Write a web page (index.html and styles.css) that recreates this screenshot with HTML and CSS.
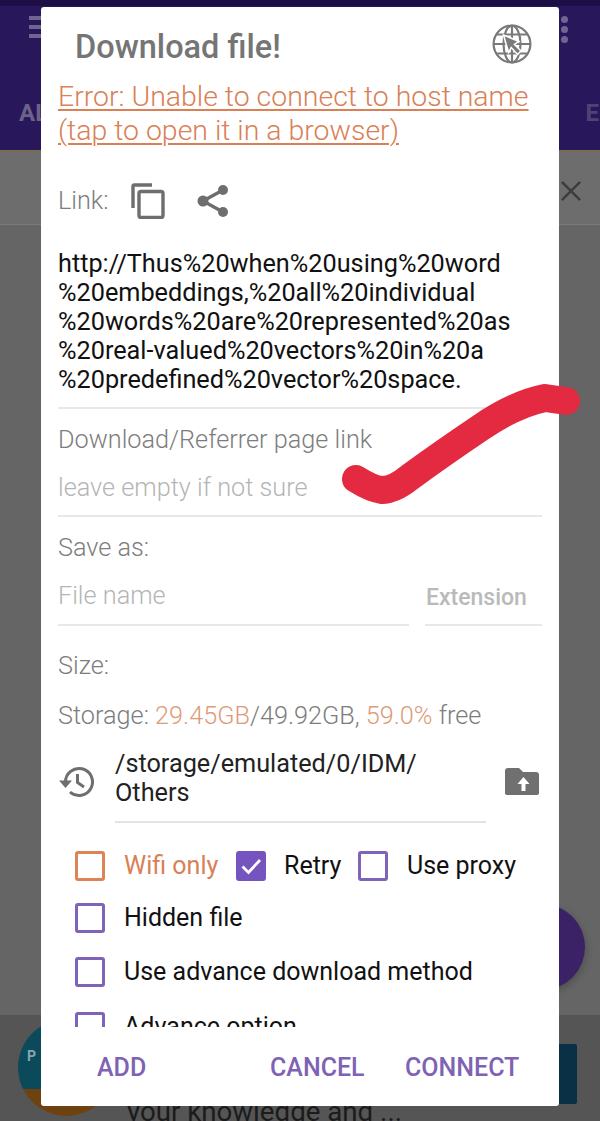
FILE: index.html
```html
<!DOCTYPE html>
<html lang="en">
<head>
<meta charset="utf-8">
<title>Download file!</title>
<link rel="stylesheet" href="styles.css">
</head>
<body>
<div class="app">
  <header class="appbar">
    <div class="toprow">
      <div class="burger"><i></i><i></i><i></i></div>
      <div class="dots"><i></i><i></i><i></i></div>
    </div>
    <div class="tabs"><span>AL</span><span class="tab-dim">EL</span></div>
  </header>
  <div class="content">
    <div class="notice">
      <svg class="close" viewBox="0 0 24 24"><path d="M2 2 22 22M22 2 2 22"/></svg>
    </div>
    <div class="fab-wrap"><div class="fab"></div></div>
  </div>
  <div class="ad">
    <div class="ad-logo"><span>P</span></div>
    <div class="ad-text">your knowledge and ...</div>
    <div class="ad-btn"></div>
  </div>
</div>

<section class="dialog">
  <div class="title-row">
    <h1 class="title">Download file!</h1>
    <svg class="globe" viewBox="0 0 40 40">
      <g class="globe-lines">
        <circle cx="20" cy="20" r="18.4"/>
        <ellipse cx="20" cy="20" rx="8.5" ry="18.4"/>
        <path d="M20 1.6V38.4M1.6 20H38.4M4.5 10.5H35.5M4.5 29.5H35.5"/>
      </g>
      <path class="cursor" d="M11.5 11 27 17.5 22.4 20.4 29 27 25.6 30.4 19.2 23.6 16.6 28.5Z"/>
    </svg>
  </div>
  <a class="error">Error: Unable to connect to host name<br>(tap to open it in a browser)</a>
  <div class="link-row">
    <span class="label">Link:</span>
    <svg class="icon-copy" viewBox="0 0 34 36">
      <path d="M2 25V3.5Q2 2 3.5 2H21"/>
      <rect x="8" y="8.500" width="24" height="26" rx="2"/>
    </svg>
    <svg class="icon-share" viewBox="0 0 32 36">
      <path class="share-line" d="M26 7 6 18 26 29"/>
      <circle cx="26" cy="7" r="5"/><circle cx="6" cy="18" r="5.500"/><circle cx="26" cy="29" r="5"/>
    </svg>
  </div>
  <p class="url">http://Thus%20when%20using%20word<br>%20embeddings,%20all%20individual<br>%20words%20are%20represented%20as<br>%20real-valued%20vectors%20in%20a<br>%20predefined%20vector%20space.</p>
  <div class="field-referrer">
    <div class="label">Download/Referrer page link</div>
    <div class="hint">leave empty if not sure</div>
  </div>
  <div class="label save-as">Save as:</div>
  <div class="name-row">
    <div class="hint name">File name</div>
    <div class="ext">Extension</div>
  </div>
  <div class="label size">Size:</div>
  <div class="label storage">Storage: <b>29.45GB</b>/49.92GB, <b>59.0%</b> free</div>
  <div class="path-row">
    <svg class="icon-history" viewBox="0 0 36 36">
      <path d="M6.500 18A13.500 13.500 0 1 1 11 28"/>
      <path d="M18.500 10V18.500L25 23"/>
      <path class="arrow" d="M0 16.500H13L6.500 24Z"/>
    </svg>
    <div class="path">/storage/emulated/0/IDM/<br>Others</div>
    <svg class="icon-folder" viewBox="0 0 34 30">
      <path class="folder" d="M3 1H14L18 5H31Q34 5 34 8V26Q34 28 31 28H3Q0 28 0 26V4Q0 1 3 1Z"/>
      <path class="up" d="M20.500 24V17H24.500L18.500 10 12.500 17H16.500V24Z"/>
    </svg>
  </div>
  <div class="options">
    <div class="opt-row first">
      <span class="box box-warn"></span><span class="opt opt-warn opt-wifi">Wifi only</span>
      <span class="box box-on"><svg viewBox="0 0 30 30"><path d="M6.500 15.500 12.500 21.500 24 9"/></svg></span><span class="opt opt-retry">Retry</span>
      <span class="box"></span><span class="opt">Use proxy</span>
    </div>
    <div class="opt-row hidden-row"><span class="box"></span><span class="opt">Hidden file</span></div>
    <div class="opt-row adv-row"><span class="box"></span><span class="opt">Use advance download method</span></div>
    <div class="opt-row last-row"><span class="box"></span><span class="opt">Advance option</span></div>
  </div>
  <div class="actions">
    <span class="btn-add">ADD</span>
    <span class="btn-cancel">CANCEL</span>
    <span class="btn-connect">CONNECT</span>
  </div>
</section>

<svg class="scribble" viewBox="0 0 600 1121"><path d="M356 479Q372 489 382 490 394 490 410 477 440 455 480 428 515 404 545 398L566 401"/></svg>
</body>
</html>
```
FILE: styles.css
```css
* { box-sizing: border-box; }
html, body { margin: 0; padding: 0; }
body { width: 600px; height: 1121px; overflow: hidden; position: relative; font-family: Roboto, "Liberation Sans", sans-serif; background: #666; }

.app { width: 600px; height: 1121px; display: flex; flex-direction: column; overflow: hidden; }
.appbar { height: 152px; background: #29175c; border-top: 6px solid #1d0f45; border-bottom: 2px solid #7a6a52; flex: none; }
.toprow { display: flex; justify-content: space-between; padding: 10px 32px 0 29px; height: 90px; }
.burger { display: flex; flex-direction: column; gap: 5px; width: 24px; }
.burger i { display: block; height: 4px; background: #6f6590; }
.dots { display: flex; flex-direction: column; gap: 3px; }
.dots i { display: block; width: 7px; height: 7px; border-radius: 50%; background: #6f6590; }
.tabs { display: flex; justify-content: space-between; padding: 0 0 0 19px; margin-top: 2px; font-size: 24px; font-weight: 700; color: #6c6288; line-height: 30px; width: 612px; overflow: hidden; }
.tab-dim { color: #4e4474; }

.content { flex: 1; display: flex; flex-direction: column; background: #656565; }
.notice { height: 73px; background: #6d6d6d; border-bottom: 1px solid #7b7b7b; display: flex; justify-content: flex-end; align-items: flex-start; padding: 28px 18px 0 0; }
.close { width: 22px; height: 22px; fill: none; stroke: #3c3c3c; stroke-width: 2.600; }
.fab-wrap { flex: 1; display: flex; justify-content: flex-end; align-items: flex-end; padding: 0 15px 25px 0; }
.fab { width: 86px; height: 86px; border-radius: 50%; background: #3b2266; box-shadow: 0 3px 8px rgba(0,0,0,.25); }

.ad { height: 106px; flex: none; background: #555; position: relative; display: flex; padding: 4px 23px 0 18px; }
.ad-logo { width: 97px; height: 97px; border-radius: 50%; flex: none; background: linear-gradient(#0b4a5a 0 72%, #6e4210 72%); color: #8aa5ad; font-size: 14px; font-weight: 700; padding: 29px 0 0 9px; }
.ad-text { flex: 1; margin: 75px 0 0 12px; font-size: 27.700px; line-height: 36px; color: #1b1b1b; white-space: nowrap; }
.ad-btn { width: 40px; height: 60px; margin-top: 25px; background: #0a3045; border-radius: 2px; flex: none; }

.dialog { position: absolute; left: 41px; top: 7px; width: 518px; height: 1099px; background: #fff; border-radius: 3px; padding: 0 17px; display: flex; flex-direction: column; }
.title-row { height: 73px; display: flex; justify-content: space-between; align-items: flex-start; padding: 15px 0 0 17px; flex: none; }
.title { margin: 0; font-size: 32.500px; line-height: 50px; font-weight: 500; color: #757575; white-space: nowrap; }
.globe { width: 40px; height: 40px; margin: 2px 10px 0 0; }
.globe-lines { fill: none; stroke: #7a7a7a; stroke-width: 2.200; }
.cursor { fill: #7a7a7a; stroke: #fff; stroke-width: 1.500; }
.error { display: block; font-size: 28.450px; font-weight: 300; line-height: 34px; color: #d98055; text-decoration: underline; text-underline-offset: 3px; text-decoration-thickness: 1.500px; white-space: nowrap; flex: none; }
.link-row { display: flex; align-items: center; height: 60px; margin-top: 23px; flex: none; }
.label { font-size: 25.250px; line-height: 34px; font-weight: 300; color: #7d7d7d; white-space: nowrap; }
.icon-copy { width: 34px; height: 36px; margin-left: 22px; fill: none; stroke: #6e6e6e; stroke-width: 3.400; }
.icon-share { width: 32px; height: 36px; margin-left: 32px; fill: #6e6e6e; }
.share-line { fill: none; stroke: #6e6e6e; stroke-width: 3.400; }
.url { margin: 18px 0 0; height: 160px; font-size: 25.250px; line-height: 29px; color: #111; border-bottom: 2px solid #e8e8e8; width: 484px; white-space: nowrap; flex: none; }
.field-referrer { height: 108px; width: 484px; border-bottom: 2px solid #e8e8e8; padding-top: 14px; flex: none; }
.hint { font-size: 25.250px; line-height: 34px; font-weight: 300; color: #b5b5b5; }
.field-referrer .hint { margin-top: 14px; }
.save-as { margin-top: 14px; flex: none; }
.name-row { display: flex; gap: 16px; margin-top: 14px; width: 484px; flex: none; }
.name { width: 351px; height: 47px; border-bottom: 2px solid #e8e8e8; }
.ext { width: 117px; height: 47px; border-bottom: 2px solid #e8e8e8; padding: 2px 0 0 1px; font-size: 23px; line-height: 34px; font-weight: 500; color: #bababa; }
.size { margin-top: 23px; flex: none; }
.storage { margin-top: 16px; flex: none; }
.storage b { font-weight: 300; color: #dd9b78; }
.path-row { display: flex; align-items: flex-start; margin-top: 16px; height: 75px; flex: none; }
.icon-history { width: 36px; height: 36px; margin: 15px 0 0 1px; fill: none; stroke: #6e6e6e; stroke-width: 3; }
.arrow { fill: #6e6e6e; stroke: none; }
.path { width: 371px; height: 74px; margin-left: 20px; border-bottom: 2px solid #e4e4e4; font-size: 25.250px; line-height: 29px; color: #222; white-space: nowrap; }
.icon-folder { width: 34px; height: 30px; margin: 18px 0 0 19px; }
.folder { fill: #707070; }
.up { fill: #fff; }
.options { height: 203px; overflow: hidden; padding: 27px 0 0 17px; flex: none; }
.opt-row { display: flex; align-items: center; height: 30px; font-size: 25px; color: #111; white-space: nowrap; }
.box { width: 30px; height: 30px; flex: none; border: 3px solid #7e63b8; border-radius: 3px; }
.box-warn { border-color: #dd8355; }
.box-on { background: #7654c0; border-color: #7654c0; border-width: 0; }
.box-on svg { display: block; width: 30px; height: 30px; fill: none; stroke: #fff; stroke-width: 2.800; }
.opt { margin-left: 19px; line-height: 30px; }
.opt-warn { color: #d98055; font-weight: 400; }
.opt-wifi { width: 93px; margin-right: 19px; }
.opt-retry { width: 55px; margin-left: 18px; margin-right: 19px; }
.hidden-row { margin-top: 22px; }
.adv-row { margin-top: 24px; }
.last-row { margin-top: 25px; }
.actions { position: relative; display: flex; align-items: center; height: 81px; padding-left: 39px; font-size: 25px; line-height: 30px; font-weight: 500; color: #7e63b4; flex: none; }
.btn-add { width: 173px; }
.btn-cancel { width: 135px; }
.scribble { position: absolute; left: 0; top: 0; width: 600px; height: 1121px; fill: none; stroke: #e32a40; stroke-width: 28; stroke-linecap: round; stroke-linejoin: round; pointer-events: none; }
```
